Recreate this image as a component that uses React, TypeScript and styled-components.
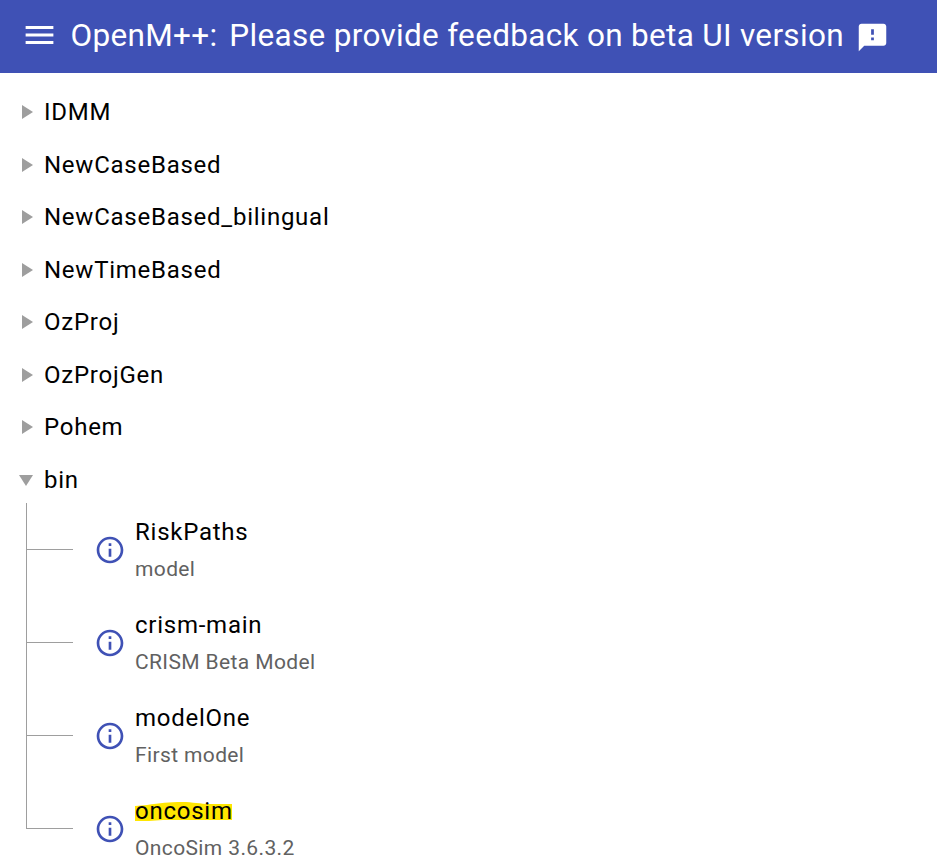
import React from "react";
import styled, { createGlobalStyle } from "styled-components";

const GlobalStyle = createGlobalStyle`
  *, *::before, *::after { box-sizing: border-box; }
  html, body { margin: 0; background: #fff; overflow: hidden; }
  body { font-family: Roboto, "Liberation Sans", sans-serif; color: #000; }
`;

const Page = styled.div`
  display: flex;
  flex-direction: column;
  height: 867px;
  overflow: hidden;
`;

const Toolbar = styled.header`
  display: flex;
  align-items: center;
  flex: none;
  height: 73px;
  padding: 0 21px 2px;
  background: #3f51b5;
  color: #fff;
`;

const IconButton = styled.button<{ $drop?: number }>`
  display: flex;
  flex: none;
  margin-top: ${(p) => p.$drop ?? 0}px;
  padding: 0;
  border: 0;
  background: none;
  color: inherit;
`;

const Title = styled.h1`
  display: flex;
  gap: 12px;
  margin: 0 12px 0 12.5px;
  font-size: 31.5px;
  font-weight: 400;
  line-height: 48px;
  letter-spacing: 0.315px;
  white-space: nowrap;
`;

const Tree = styled.ul`
  margin: 0;
  padding: 10px 0 0 18px;
  list-style: none;
`;

const Folder = styled.li`
  display: block;
`;

const FolderHeader = styled.div`
  display: flex;
  align-items: center;
  height: 52.5px;
  padding-top: 5.5px;
`;

const Arrow = styled.svg`
  flex: none;
  width: 18px;
  height: 18px;
  margin-right: 8px;
  fill: #9e9e9e;
`;

const Name = styled.span`
  font-size: 24px;
  line-height: 36px;
  letter-spacing: 0.75px;
  white-space: nowrap;
`;

const Models = styled.ul`
  margin: 0;
  padding: 0 0 0 8px;
  list-style: none;
`;

const Model = styled.li`
  display: flex;
  height: 93px;
`;

const Branch = styled.span<{ $last?: boolean }>`
  display: flex;
  flex-direction: column;
  width: 47px;
  height: ${(p) => (p.$last ? "47px" : "93px")};
  border-left: 1px solid #9e9e9e;

  &::after {
    content: "";
    height: 1px;
    margin-top: 46px;
    background: #9e9e9e;
  }
`;

const InfoIcon = styled.svg`
  flex: none;
  width: 32px;
  height: 32px;
  margin: 31px 9px 0 21px;
  fill: #3f51b5;
`;

const Labels = styled.div`
  display: flex;
  flex-direction: column;
  align-items: flex-start;
  padding-top: 11px;
`;

const Description = styled.span`
  font-size: 21px;
  line-height: 36px;
  letter-spacing: 0.375px;
  color: #616161;
  white-space: nowrap;
  margin-top: 1px;
`;

const Marked = styled.span`
  position: relative;
  isolation: isolate;
`;

const Marker = styled.svg`
  position: absolute;
  z-index: -1;
  left: 0;
  top: 3px;
  width: 98px;
  height: 22px;
  fill: #ffe600;
`;

const folders = [
  "IDMM",
  "NewCaseBased",
  "NewCaseBased_bilingual",
  "NewTimeBased",
  "OzProj",
  "OzProjGen",
  "Pohem",
];

const models = [
  { name: "RiskPaths", description: "model" },
  { name: "crism-main", description: "CRISM Beta Model" },
  { name: "modelOne", description: "First model" },
  { name: "oncosim", description: "OncoSim 3.6.3.2", marked: true },
];

export default function App() {
  return (
    <Page>
      <GlobalStyle />
      <Toolbar>
        <IconButton aria-label="Menu" $drop={-1}>
          <svg width="37" height="36" viewBox="0 0 24 24" fill="currentColor" preserveAspectRatio="none">
            <path d="M3 18h18v-2H3v2zm0-5h18v-2H3v2zm0-7v2h18V6H3z" />
          </svg>
        </IconButton>
        <Title>
          <span>OpenM++:</span>
          <span>Please provide feedback on beta UI version</span>
        </Title>
        <IconButton aria-label="Feedback" $drop={4}>
          <svg width="33" height="33" viewBox="0 0 24 24" fill="currentColor">
            <path d="M20 2H4c-1.1 0-1.99.9-1.99 2L2 22l4-4h14c1.1 0 2-.9 2-2V4c0-1.1-.9-2-2-2zm-7 12h-2v-2h2v2zm0-4h-2V6h2v4z" />
          </svg>
        </IconButton>
      </Toolbar>
      <Tree>
        {folders.map((name) => (
          <Folder key={name}>
            <FolderHeader>
              <Arrow viewBox="0 0 18 18">
                <path d="M4 2v14l11-7z" />
              </Arrow>
              <Name>{name}</Name>
            </FolderHeader>
          </Folder>
        ))}
        <Folder>
          <FolderHeader>
            <Arrow viewBox="0 0 18 18">
              <path d="M1 4h14L8 15z" />
            </Arrow>
            <Name>bin</Name>
          </FolderHeader>
          <Models>
            {models.map((model, index) => (
              <Model key={model.name}>
                <Branch $last={index === models.length - 1} />
                <InfoIcon viewBox="0 0 24 24">
                  <path d="M11 7h2v2h-2zm0 4h2v6h-2zm1-9C6.48 2 2 6.48 2 12s4.48 10 10 10 10-4.48 10-10S17.52 2 12 2zm0 18c-4.41 0-8-3.59-8-8s3.59-8 8-8 8 3.59 8 8-3.59 8-8 8z" />
                </InfoIcon>
                <Labels>
                  <Name>
                    {model.marked ? (
                      <Marked>
                        <Marker viewBox="0 0 98 22">
                          <path d="M0 6 12 5C25 3 34 2 47 2c11 0 18 2 28 2h22v16H28L14 21H0z" />
                        </Marker>
                        {model.name}
                      </Marked>
                    ) : (
                      model.name
                    )}
                  </Name>
                  <Description>{model.description}</Description>
                </Labels>
              </Model>
            ))}
          </Models>
        </Folder>
      </Tree>
    </Page>
  );
}
